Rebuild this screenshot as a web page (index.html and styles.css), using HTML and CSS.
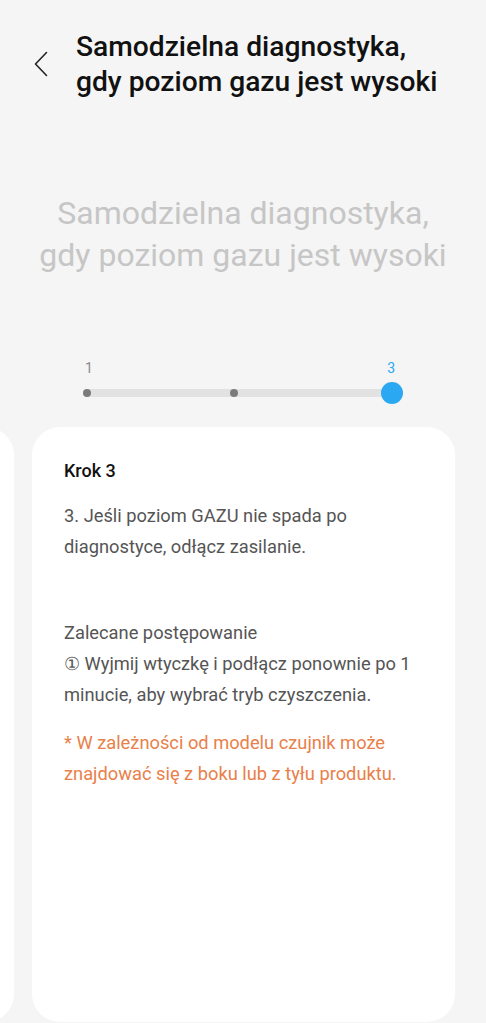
FILE: index.html
```html
<!DOCTYPE html>
<html lang="pl">
<head>
    <meta charset="UTF-8">
    <meta name="viewport" content="width=device-width, initial-scale=1.0">
    <title>Samodzielna diagnostyka</title>
    <link rel="stylesheet" href="styles.css">
</head>
<body>
    <div class="header">
        <a href="#" class="back">
            <svg width="14" height="26" viewBox="0 0 14 26">
                <polyline points="12.5,1.5 1.5,13 12.5,24.5" fill="none" stroke="#222" stroke-width="1.6" stroke-linecap="round" stroke-linejoin="round"/>
            </svg>
        </a>
        <h1>Samodzielna diagnostyka,<br>gdy poziom gazu jest wysoki</h1>
    </div>

    <div class="hero">
        <h2>Samodzielna diagnostyka,<br>gdy poziom gazu jest wysoki</h2>
    </div>

    <div class="stepper">
        <div class="labels">
            <span>1</span>
            <span class="active">3</span>
        </div>
        <div class="track">
            <span class="dot"></span>
            <span class="dot middle"></span>
            <span class="dot current"></span>
        </div>
    </div>

    <div class="cards">
        <div class="card prev"></div>
        <div class="card">
            <h3>Krok 3</h3>
            <p class="step">3. Jeśli poziom GAZU nie spada po diagnostyce, odłącz zasilanie.</p>
            <p class="advice">Zalecane postępowanie<br>① Wyjmij wtyczkę i podłącz ponownie po 1 minucie, aby wybrać tryb czyszczenia.</p>
            <p class="note">* W zależności od modelu czujnik może znajdować się z boku lub z tyłu produktu.</p>
        </div>
    </div>
</body>
</html>
```

FILE: styles.css
```css
body {
    margin: 0;
    height: 1023px;
    overflow: hidden;
    font-family: Roboto, "Noto Sans", sans-serif;
    background-color: #f5f5f5;
    display: flex;
    flex-direction: column;
}

.header {
    display: flex;
    align-items: center;
    padding: 29px 20px 0 34px;
}

.back {
    display: flex;
    width: 42px;
    height: 26px;
}

.header h1 {
    margin: 0;
    font-size: 28.2px;
    font-weight: 500;
    line-height: 35px;
    color: #111;
}

.hero {
    padding-top: 93px;
    text-align: center;
}

.hero h2 {
    margin: 0;
    font-size: 32px;
    font-weight: 400;
    line-height: 42px;
    color: #c6c6c6;
}

.stepper {
    width: 306px;
    margin: 84px 0 0 86px;
}

.labels {
    display: flex;
    justify-content: space-between;
    font-size: 14px;
    line-height: 16px;
    color: #8a8a8a;
}

.labels span:first-child {
    margin-left: -1px;
}

.labels .active {
    color: #2aa8f2;
    margin-right: -3px;
}

.track {
    height: 8px;
    margin-top: 13px;
    background-color: #e2e2e2;
    border-radius: 4px;
    display: flex;
    align-items: center;
}

.dot {
    flex: none;
    width: 8px;
    height: 8px;
    border-radius: 50%;
    background-color: #7b7b7b;
    margin-left: -3px;
}

.dot.middle {
    margin-left: 139px;
}

.dot.current {
    width: 22px;
    height: 22px;
    margin-left: auto;
    margin-right: -11px;
    background-color: #2aa8f2;
}

.cards {
    flex: 1;
    display: flex;
    gap: 18px;
    margin: 30px 0 1px -409px;
}

.card {
    flex: 0 0 423px;
    background-color: #fff;
    border-radius: 28px;
    padding: 28px 32px;
    box-sizing: border-box;
}

.card h3 {
    margin: 0;
    font-size: 18px;
    font-weight: 500;
    line-height: 32px;
    color: #111;
}

.card p {
    margin: 0;
    font-size: 18.3px;
    line-height: 31px;
    color: #555;
}

.card .step {
    margin-top: 13px;
}

.card .advice {
    margin-top: 55px;
}

.card .note {
    margin-top: 17px;
    color: #e9804a;
}
```
